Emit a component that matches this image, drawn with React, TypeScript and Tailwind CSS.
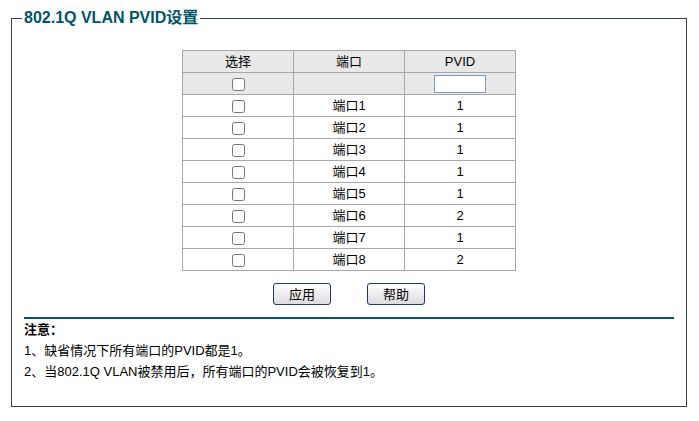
import { useState } from "react";

const ports = [
  { name: "端口1", pvid: 1 },
  { name: "端口2", pvid: 1 },
  { name: "端口3", pvid: 1 },
  { name: "端口4", pvid: 1 },
  { name: "端口5", pvid: 1 },
  { name: "端口6", pvid: 2 },
  { name: "端口7", pvid: 1 },
  { name: "端口8", pvid: 2 },
];

const cell = "border border-[#a8a8a8] h-[22px] p-0 text-center align-middle";

export default function App() {
  const [checked, setChecked] = useState<boolean[]>(ports.map(() => false));

  return (
    <div
      className="w-[699px] h-[421px] bg-white pt-[9px] pl-[11px] text-[13px] text-black"
      style={{ fontFamily: '"Liberation Sans", "Noto Sans CJK SC", sans-serif' }}
    >
      <fieldset className="w-[676px] border border-[#35434d] px-[12px] pb-[24px]">
        <legend className="ml-[-2px] px-[2px] text-[16px] leading-[18px] font-bold text-[#005566]">
          802.1Q VLAN PVID设置
        </legend>

        <table className="mx-auto mt-[23px] w-[334px] border-collapse table-fixed">
          <tbody>
            <tr className="bg-[#e8e8e8]">
              <td className={cell}>选择</td>
              <td className={cell}>端口</td>
              <td className={cell}>PVID</td>
            </tr>
            <tr className="bg-[#e8e8e8]">
              <td className={cell}>
                <input type="checkbox" className="w-[13px] h-[13px] align-middle" />
              </td>
              <td className={cell}></td>
              <td className={cell}>
                <input
                  type="text"
                  className="w-[52px] h-[18px] border border-[#7a9cc6] bg-white align-middle"
                />
              </td>
            </tr>
            {ports.map((p, i) => (
              <tr key={p.name}>
                <td className={cell}>
                  <input
                    type="checkbox"
                    className="w-[13px] h-[13px] align-middle"
                    checked={checked[i]}
                    onChange={() =>
                      setChecked((c) => c.map((v, j) => (j === i ? !v : v)))
                    }
                  />
                </td>
                <td className={cell}>{p.name}</td>
                <td className={cell}>{p.pvid}</td>
              </tr>
            ))}
          </tbody>
        </table>

        <div className="flex justify-center gap-[36px] mt-[12px]">
          <button className="w-[58px] h-[22px] rounded-[3px] border border-[#1e3a6a] bg-gradient-to-b from-white to-[#dcdcdc] text-[13px] leading-none">
            应用
          </button>
          <button className="w-[58px] h-[22px] rounded-[3px] border border-[#1e3a6a] bg-gradient-to-b from-white to-[#dcdcdc] text-[13px] leading-none">
            帮助
          </button>
        </div>

        <div className="mt-[12px] border-t-2 border-[#005566] leading-[21px]">
          <div className="font-bold">注意：</div>
          <div>1、缺省情况下所有端口的PVID都是1。</div>
          <div>2、当802.1Q VLAN被禁用后，所有端口的PVID会被恢复到1。</div>
        </div>
      </fieldset>
    </div>
  );
}
